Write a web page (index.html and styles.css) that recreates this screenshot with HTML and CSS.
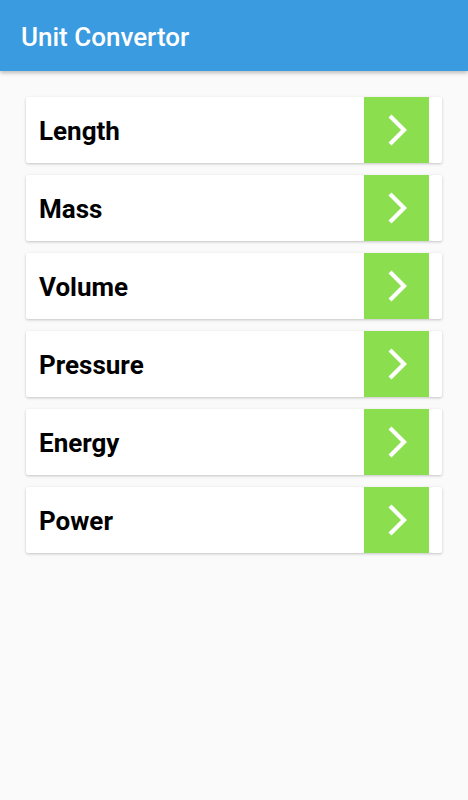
FILE: index.html
```html
<!DOCTYPE html>
<html>
<head>
<meta charset="utf-8">
<link rel="stylesheet" href="styles.css">
</head>
<body>
<header class="appbar"><h1 class="title">Unit Convertor</h1></header>
<main class="list">
  <div class="card"><span class="label">Length</span><span class="go"><svg viewBox="0 0 24 32" width="24" height="32"><path d="M4 2 L18 16 L4 30" fill="none" stroke="#fff" stroke-width="4.2"/></svg></span></div>
  <div class="card"><span class="label">Mass</span><span class="go"><svg viewBox="0 0 24 32" width="24" height="32"><path d="M4 2 L18 16 L4 30" fill="none" stroke="#fff" stroke-width="4.2"/></svg></span></div>
  <div class="card"><span class="label">Volume</span><span class="go"><svg viewBox="0 0 24 32" width="24" height="32"><path d="M4 2 L18 16 L4 30" fill="none" stroke="#fff" stroke-width="4.2"/></svg></span></div>
  <div class="card"><span class="label">Pressure</span><span class="go"><svg viewBox="0 0 24 32" width="24" height="32"><path d="M4 2 L18 16 L4 30" fill="none" stroke="#fff" stroke-width="4.2"/></svg></span></div>
  <div class="card"><span class="label">Energy</span><span class="go"><svg viewBox="0 0 24 32" width="24" height="32"><path d="M4 2 L18 16 L4 30" fill="none" stroke="#fff" stroke-width="4.2"/></svg></span></div>
  <div class="card"><span class="label">Power</span><span class="go"><svg viewBox="0 0 24 32" width="24" height="32"><path d="M4 2 L18 16 L4 30" fill="none" stroke="#fff" stroke-width="4.2"/></svg></span></div>
</main>
</body>
</html>
```
FILE: styles.css
```css
html, body { margin: 0; padding: 0; }
body { background: #fafafa; font-family: Roboto, "Liberation Sans", sans-serif; height: 800px; }
.appbar {
  height: 71px;
  background: #3a9be0;
  box-shadow: 0 2px 4px rgba(0,0,0,0.25);
  display: flex;
  align-items: center;
  padding-left: 21px;
  position: relative;
}
.title { margin: 0; color: #fff; font-size: 26px; font-weight: 500; padding-top: 2px; }
.list { padding: 26px 26px 0 26px; display: flex; flex-direction: column; gap: 12px; }
.card {
  height: 66px;
  background: #fff;
  border-radius: 2px;
  box-shadow: 0 1px 3px rgba(0,0,0,0.22);
  display: flex;
  align-items: center;
  padding-right: 13px;
}
.label { flex: 1; padding-left: 13px; padding-top: 2px; font-size: 26px; font-weight: 700; color: #000; }
.go {
  width: 65px; align-self: stretch;
  background: #8bdf4e;
  display: flex; align-items: center; justify-content: center;
}
.go svg { display: block; margin-left: 2px; }
```
